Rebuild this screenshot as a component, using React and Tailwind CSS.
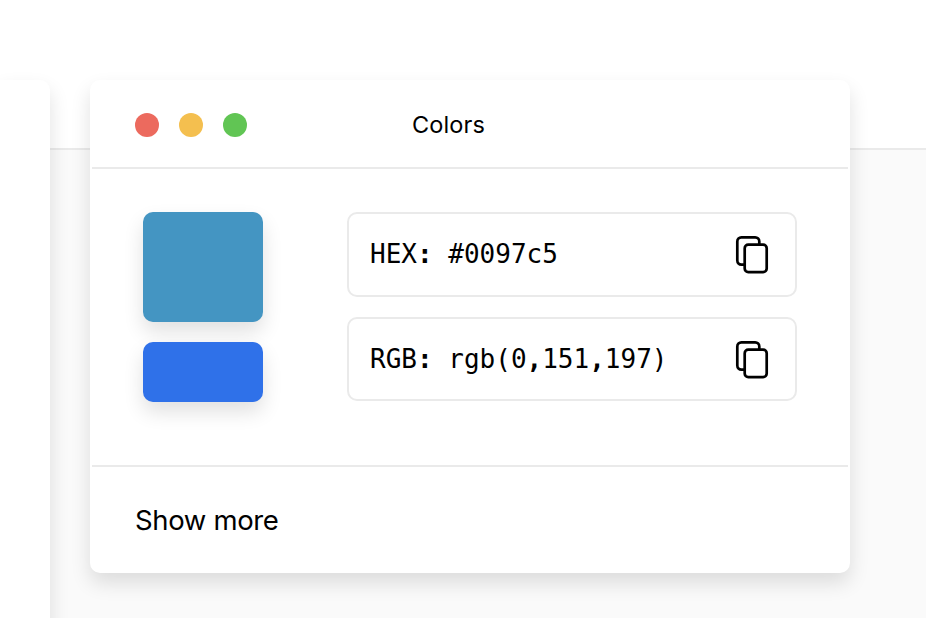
const SHADOW = "shadow-[0_10px_20px_rgba(0,0,0,0.12)]";

function CopyIcon() {
  return (
    <svg className="-mt-[3px] h-10 w-9 shrink-0" viewBox="0 0 36 40" fill="none" stroke="#000" strokeWidth="2.7">
      <rect x="10.7" y="9.7" width="22" height="27.4" rx="3.6" />
      <path d="M10.7 29.7H7.4A4.1 4.1 0 0 1 3.3 25.6V6.4A4.1 4.1 0 0 1 7.4 2.3H21.2A4.1 4.1 0 0 1 25.3 6.4V9.7" />
    </svg>
  );
}

function CodeText({ text }) {
  return text
    .split(/([:,])/)
    .map((part, i) => (i % 2 ? <b key={i} className="font-bold">{part}</b> : part));
}

function ColorField({ label, value, className }) {
  return (
    <div className={"flex w-[450px] items-start justify-between rounded-[10px] border-2 border-[#eaeaea] pl-[21px] pr-[25px] pt-6 " + className}>
      <span className="whitespace-pre font-['DejaVu_Sans_Mono',monospace] text-[26px] leading-8 text-black">
        <CodeText text={label + ": " + value} />
      </span>
      <CopyIcon />
    </div>
  );
}

export default function App() {
  return (
    <div className="grid h-[618px] w-[926px] grid-cols-1 grid-rows-1 overflow-hidden bg-white font-[Inter,sans-serif] text-black">
      <div className="col-start-1 row-start-1 flex flex-col">
        <div className="h-[150px] border-b-2 border-[#eaeaea] bg-white" />
        <div className="flex-1 bg-[#fafafa]" />
      </div>
      <div className="col-start-1 row-start-1 flex items-start gap-10 pt-20">
        <div className={"h-[600px] w-[50px] shrink-0 rounded-r-[10px] bg-white " + SHADOW} />
        <div className={"flex h-[493px] w-[760px] shrink-0 flex-col rounded-[10px] border-2 border-white bg-white " + SHADOW}>
          <header className="flex h-[87px] items-center border-b-2 border-[#eaeaea] pl-[43px]">
            <div className="flex gap-5">
              <span className="size-6 rounded-full bg-[#ec6a5e]" />
              <span className="size-6 rounded-full bg-[#f4bf4f]" />
              <span className="size-6 rounded-full bg-[#61c554]" />
            </div>
            <h1 className="ml-[165px] text-[23.5px] tracking-[0.1px]">Colors</h1>
          </header>
          <main className="flex h-[298px] gap-[84px] border-b-2 border-[#eaeaea] pl-[51px] pt-[43px]">
            <div className="flex flex-col gap-5">
              <div className={"h-[110px] w-[120px] rounded-[10px] bg-[#4495c2] " + SHADOW} />
              <div className={"h-[60px] w-[120px] rounded-[10px] bg-[#2f71e9] " + SHADOW} />
            </div>
            <div className="flex flex-col gap-5">
              <ColorField label="HEX" value="#0097c5" className="h-[85px]" />
              <ColorField label="RGB" value="rgb(0,151,197)" className="h-[84px]" />
            </div>
          </main>
          <footer className="flex flex-1 items-center pl-[43px] pt-1">
            <span className="text-[27.5px] tracking-[-0.35px]">Show more</span>
          </footer>
        </div>
      </div>
    </div>
  );
}
